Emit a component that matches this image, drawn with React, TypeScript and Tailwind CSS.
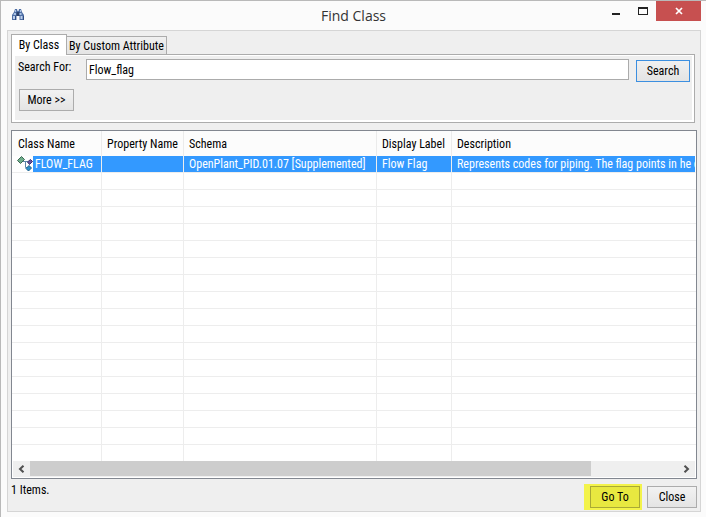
import { useState } from "react";

const columns = [
  { name: "Class Name", width: "w-[90px]" },
  { name: "Property Name", width: "w-[82px]" },
  { name: "Schema", width: "w-[193px]" },
  { name: "Display Label", width: "w-[75px]" },
  { name: "Description", width: "" },
];

const blankRows = Array.from({ length: 17 }, (_, i) => i);

const button =
  "h-[22px] border border-[#acacac] bg-linear-to-b from-[#f2f2f2] to-[#e4e4e4] text-center";

function BinocularsIcon() {
  return (
    <svg width="14" height="14" viewBox="0 0 14 14" aria-hidden="true">
      <path d="M4 1h2l.5 2h1L8 1h2l1 3 2 3v5H8.500V8h-3v4H1V7l2-3z" fill="#4f6fa5" />
      <path d="M5.500 4h3v4h-3z" fill="#2c426c" />
      <path d="M4 2h1v2H4zM3 5h2v2H2.500zM9 2h1v2H9zM8.500 5h2v2h-2z" fill="#a9c2e5" />
      <path d="M2 8h2v3H2zM9.500 8h2v3h-2z" fill="#bccfec" />
      <path d="M4 8h1v4H4zM12 8h1v4h-1z" fill="#2f4c82" />
    </svg>
  );
}

function ClassIcon() {
  return (
    <svg className="shrink-0" width="16" height="16" viewBox="0 0 16 16" aria-hidden="true">
      <path d="M6 5.5h5M8.5 5.5v6h2" fill="none" stroke="#5c87a8" />
      <path d="M.5 4.5l4-4 3 3-4 4z" fill="#6fae8c" stroke="#3b6753" />
      <path d="M10.5 6l3-2.500 2 2-3 3z" fill="#6553a0" stroke="#3d2f70" />
      <path d="M9 12.500l3-3 2.500 2.500-3 3z" fill="#2b91c9" stroke="#1c5f8d" />
    </svg>
  );
}

function TitleBar() {
  return (
    <header className="grid h-[29px] grid-cols-[1fr_auto_1fr] text-[#333]">
      <div className="pt-[7px] pl-[10px]">
        <BinocularsIcon />
      </div>
      <h1 className="pt-1 font-['Open_Sans',sans-serif] text-[14px] leading-[22px]">Find Class</h1>
      <div className="flex h-5 justify-end pr-[5px]">
        <button aria-label="Minimize" className="flex w-[27px] justify-center pt-3">
          <span className="h-[2px] w-2 bg-[#222]" />
        </button>
        <button aria-label="Maximize" className="flex w-[27px] justify-center pt-[6px]">
          <span className="h-2 w-[10px] border border-t-2 border-[#222]" />
        </button>
        <button aria-label="Close window" className="flex w-[45px] items-center justify-center bg-[#c75050]">
          <svg width="8" height="8" viewBox="0 0 8 8" aria-hidden="true">
            <path d="M1 1l6 6M7 1L1 7" stroke="#fff" strokeWidth="1.7" />
          </svg>
        </button>
      </div>
    </header>
  );
}

function SearchPanel() {
  const [query, setQuery] = useState("Flow_flag");

  return (
    <section className="mr-[5px]">
      <div role="tablist" className="flex items-end whitespace-nowrap">
        <button
          role="tab"
          aria-selected="true"
          className="relative -mb-px h-[21px] w-14 border border-b-0 border-[#acacac] bg-white pb-px"
        >
          By Class
        </button>
        <button
          role="tab"
          aria-selected="false"
          className="h-[18px] w-[100px] border border-b-0 border-l-0 border-[#acacac] bg-linear-to-b from-[#f0f0f0] to-[#e5e5e5]"
        >
          By Custom Attribute
        </button>
      </div>
      <div className="border border-[#acacac] bg-white pt-px pr-[2px] pb-[2px] pl-[3px]">
        <div className="bg-[#efefef] pt-[3px] pr-[2px] pb-[9px] pl-[3px]">
          <div className="flex">
            <label htmlFor="search" className="w-[68px] leading-4">
              Search For:
            </label>
            <input
              id="search"
              value={query}
              onChange={(e) => setQuery(e.target.value)}
              className="h-[21px] min-w-0 flex-1 border border-[#ababab] bg-white px-[2px] outline-none"
            />
            <button className="mt-px ml-[7px] h-[22px] w-[54px] border border-[#3c8fe0] bg-linear-to-b from-[#f0f0f0] to-[#e4e4e4]">
              Search
            </button>
          </div>
          <button className={`${button} mt-[7px] ml-px w-[55px]`}>{"More >>"}</button>
        </div>
      </div>
    </section>
  );
}

function Results() {
  return (
    <section className="mt-[7px] mr-[3px] flex min-h-0 flex-1 flex-col border border-[#828790] bg-white">
      <div className="min-h-0 flex-1 overflow-hidden">
        <table className="w-full table-fixed border-separate border-spacing-0 text-left whitespace-nowrap">
          <thead>
            <tr className="h-[25px] bg-[#fcfcfc]">
              {columns.map((col) => (
                <th
                  key={col.name}
                  className={`${col.width} border-r border-[#ebebeb] p-0 pl-[5px] font-normal first:pl-[6px] last:border-r-0`}
                >
                  {col.name}
                </th>
              ))}
            </tr>
          </thead>
          <tbody>
            <tr className="h-[17px] leading-4 text-white">
              <td className="border-r border-b border-[#ededed] p-0 pl-[5px]">
                <div className="flex">
                  <ClassIcon />
                  <span className="flex-1 bg-[#3399ff] pl-[2px]">FLOW_FLAG</span>
                </div>
              </td>
              <td className="border-r border-b border-[#ededed] bg-[#3399ff] bg-clip-padding p-0" />
              <td className="border-r border-b border-[#ededed] bg-[#3399ff] bg-clip-padding p-0 pl-[5px]">
                OpenPlant_PID.01.07 [Supplemented]
              </td>
              <td className="border-r border-b border-[#ededed] bg-[#3399ff] bg-clip-padding p-0 pl-[5px]">
                Flow Flag
              </td>
              <td className="overflow-hidden border-r border-b border-r-white border-b-[#ededed] bg-[#3399ff] bg-clip-padding p-0 pl-[5px]">
                Represents codes for piping. The flag points in he c
              </td>
            </tr>
            {blankRows.map((row) => (
              <tr key={row} className="h-[17px]">
                {columns.map((col) => (
                  <td key={col.name} className="border-r border-b border-[#ededed] p-0 last:border-r-0" />
                ))}
              </tr>
            ))}
          </tbody>
        </table>
      </div>
      <div className="mx-px mb-px flex h-4 shrink-0 bg-[#efefef] text-[#505050]">
        <button aria-label="Scroll left" className="flex w-[17px] items-center justify-center">
          <svg width="7" height="8" viewBox="0 0 7 8" aria-hidden="true">
            <path d="M5.5 .7L2 4l3.5 3.3" fill="none" stroke="currentColor" strokeWidth="2" />
          </svg>
        </button>
        <div className="flex-1">
          <div className="h-[15px] w-[86.5%] bg-[#cdcdcd]" />
        </div>
        <button aria-label="Scroll right" className="flex w-[17px] items-center justify-center">
          <svg width="7" height="8" viewBox="0 0 7 8" aria-hidden="true">
            <path d="M1.5 .7L5 4 1.5 7.3" fill="none" stroke="currentColor" strokeWidth="2" />
          </svg>
        </button>
      </div>
    </section>
  );
}

export default function App() {
  return (
    <main className="flex h-screen flex-col border-t border-l border-[#b9b9b9] bg-[#fbfbfb] pb-[5px] font-['Roboto_Condensed',Lato,sans-serif] text-[12px] text-black">
      <TitleBar />
      <div className="mr-[5px] ml-[6px] flex min-h-0 flex-1 flex-col border border-[#d5d5d5] bg-[#efefef] pt-[3px] pl-[3px]">
        <SearchPanel />
        <Results />
        <footer className="mr-[3px] flex h-8 shrink-0 justify-between">
          <p className="pt-[3px] leading-4">1 Items.</p>
          <div className="flex items-start pt-[5px]">
            <div className="bg-[#f3f34b] pt-[2px] pr-[2px] pb-[2px] pl-[6px]">
              <button className="h-[22px] w-[50px] border border-[#a9a935] bg-[#e8e840]">Go To</button>
            </div>
            <button className={`${button} mt-[2px] ml-[5px] w-[50px]`}>Close</button>
          </div>
        </footer>
      </div>
    </main>
  );
}
